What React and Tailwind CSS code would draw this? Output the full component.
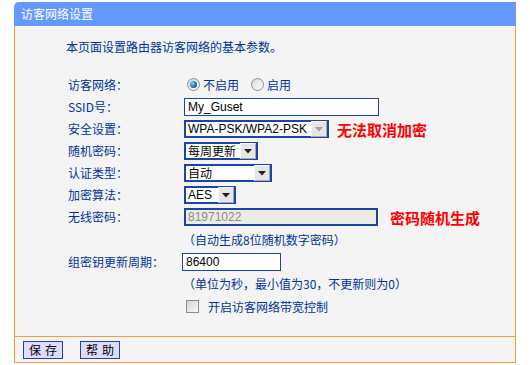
import React from "react";

const cjk = { fontFamily: '"Noto Sans CJK SC", "Noto Sans", sans-serif' };
const lat = { fontFamily: '"Liberation Sans", "Noto Sans CJK SC", sans-serif' };

function Arrow({ disabled }) {
  return (
    <div className="w-[16px] h-[16px] flex items-center justify-center bg-[#E6E6E6] border border-[#A8A8A8] border-t-[#F8F8F8] border-l-[#F8F8F8] shrink-0">
      <svg width="8" height="5" viewBox="0 0 8 5">
        <path d="M0 0H8L4 4.5Z" fill={disabled ? "#A0A0A0" : "#202020"} />
      </svg>
    </div>
  );
}

function Select({ w, text, disabled }) {
  return (
    <div className={`flex items-center h-[18px] border-2 border-[#1C44A6] bg-white justify-between ${w}`}>
      <span className="pl-[2px] text-[12px] text-black leading-none whitespace-nowrap" style={lat}>{text}</span>
      <Arrow disabled={disabled} />
    </div>
  );
}

function Row({ label, h = "h-[22px]", children }) {
  return (
    <div className={`flex items-center ${h}`}>
      <div className="w-[116px] text-[12px] text-[#003399] shrink-0" style={cjk}>{label}</div>
      <div className="flex items-center">{children}</div>
    </div>
  );
}

function Radio({ checked }) {
  return (
    <div className="w-[13px] h-[13px] rounded-full border border-[#8C8C8C] bg-gradient-to-br from-[#DADADA] to-[#FFFFFF] flex items-center justify-center">
      {checked && <div className="w-[7px] h-[7px] rounded-full bg-[radial-gradient(circle_at_35%_35%,#8FD0F5,#1A6CB0_60%,#0B3F7A)]" />}
    </div>
  );
}

export default function App() {
  return (
    <div className="w-[530px] h-[365px] bg-white pt-[2px] pl-[14px]" style={cjk}>
      <div className="w-[502px]">
        <div className="h-[24px] bg-[#6699FF] rounded-tl-[5px] text-white text-[12px] pl-[7px] flex items-center">访客网络设置</div>
        <div className="h-[310px] bg-[#F4F4F4] border-x border-[#FF9933] pt-[10px] pl-[53px]">
          <div className="h-[22px] flex items-center text-[12px] text-[#003399] -ml-[2px]">本页面设置路由器访客网络的基本参数。</div>
          <div className="h-[15px]" />
          <Row label="访客网络：" h="h-[23px]">
            <div className="flex items-center pl-[3px]">
              <Radio checked />
              <span className="ml-[3px] text-[12px] text-[#003399]">不启用</span>
              <div className="ml-[12px]"><Radio /></div>
              <span className="ml-[3px] text-[12px] text-[#003399]">启用</span>
            </div>
          </Row>
          <Row label="SSID号：">
            <div className="w-[195px] h-[18px] border border-[#1C44A6] bg-white flex items-center pl-[3px] text-[12px] text-black" style={lat}>My_Guset</div>
          </Row>
          <Row label="安全设置：">
            <Select w="w-[145px]" text="WPA-PSK/WPA2-PSK" disabled />
            <span className="ml-[8px] text-[15px] font-bold text-[#FF0000] leading-none">无法取消加密</span>
          </Row>
          <Row label="随机密码：">
            <Select w="w-[74px]" text={<span style={cjk}>每周更新</span>} />
          </Row>
          <Row label="认证类型：">
            <Select w="w-[88px]" text={<span style={cjk}>自动</span>} />
          </Row>
          <Row label="加密算法：">
            <Select w="w-[52px]" text="AES" />
          </Row>
          <Row label="无线密码：">
            <div className="w-[194px] h-[18px] border-2 border-[#1C44A6] bg-[#EBEBE4] flex items-center pl-[2px] text-[12px] text-[#8A8A8A]" style={lat}>81971022</div>
            <span className="ml-[12px] text-[15px] font-bold text-[#FF0000] leading-none">密码随机生成</span>
          </Row>
          <Row label="" h="h-[23px]">
            <span className="text-[12px] text-[#003399] -ml-[1px]">（自动生成8位随机数字密码）</span>
          </Row>
          <Row label="组密钥更新周期：">
            <div className="-ml-[2px] w-[99px] h-[18px] border border-[#1C44A6] bg-white flex items-center pl-[3px] text-[12px] text-black" style={lat}>86400</div>
          </Row>
          <Row label="">
            <span className="text-[12px] text-[#003399] -ml-[1px]">（单位为秒，最小值为30，不更新则为0）</span>
          </Row>
          <Row label="" h="h-[23px]">
            <div className="ml-[2px] w-[13px] h-[13px] border border-[#8C8C8C] bg-gradient-to-br from-[#D4D4D4] to-[#FAFAFA]" />
            <span className="ml-[9px] text-[12px] text-[#003399]">开启访客网络带宽控制</span>
          </Row>
        </div>
        <div className="h-[27px] bg-[#F4F4F4] border border-[#FF9933] flex items-center pl-[8px] gap-[17px]">
          <button className="w-[40px] h-[18px] bg-[#DDDDFF] border border-[#2244AA] text-[12px] text-black leading-none tracking-[4px] pl-[4px]">保存</button>
          <button className="w-[40px] h-[18px] bg-[#DDDDFF] border border-[#2244AA] text-[12px] text-black leading-none tracking-[4px] pl-[4px]">帮助</button>
        </div>
      </div>
    </div>
  );
}
